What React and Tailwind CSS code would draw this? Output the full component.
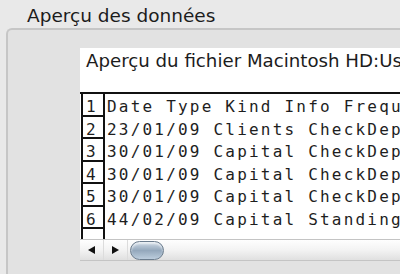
import React from "react";

const rows = [
    "Date Type Kind Info Frequency",
    "23/01/09 Clients CheckDeposit",
    "30/01/09 Capital CheckDeposit",
    "30/01/09 Capital CheckDeposit",
    "30/01/09 Capital CheckDeposit",
    "44/02/09 Capital StandingOrder",
    "",
];

const mono = "font-['DejaVu_Sans_Mono',monospace] text-[16px] text-[#1e1e1e]";

const Row = ({ n, text, tall }) => (
    <div className={`flex ${tall ? "h-[23px]" : "h-[22px]"} shrink-0`}>
        <div
            className={`ml-[1px] w-[24px] shrink-0 border-x-2 border-b-2 border-[#111] pl-[3px] pt-[3px] leading-[20px] ${mono}`}
        >
            {n}
        </div>
        <div className={`pl-[2px] pt-[3px] leading-[20px] tracking-[2.2px] whitespace-nowrap ${mono}`}>
            {text}
        </div>
    </div>
);

const App = () => {
    return (
        <div className="w-[400px] h-[274px] overflow-hidden bg-[#e9e9e9] font-['DejaVu_Sans',sans-serif]">
            <div className="h-[28px] pl-[27px] pt-[1px] text-[18.5px] leading-[29px] text-[#1c1c1c] whitespace-nowrap">
                Aperçu des données
            </div>
            <div className="ml-[6px] h-[246px] border-l-2 border-t-2 border-[#c6c6c6] rounded-tl-[6px] bg-[#e2e2e2] pt-[18px] pl-[72px]">
                <div className="h-[191px] bg-white flex flex-col overflow-hidden">
                    <div className="h-[44px] shrink-0 pl-[6px] pt-[2px] text-[18.2px] leading-[21px] text-[#1c1c1c] whitespace-nowrap">
                        Aperçu du fichier Macintosh HD:Users
                    </div>
                    <div className="border-t-2 border-[#111] flex flex-col">
                        {rows.map((text, i) => (
                            <Row key={i} n={text ? i + 1 : ""} text={text} tall={i % 2 === 0} />
                        ))}
                    </div>
                </div>
                {/* scroll bar */}
                <div className="h-[22px] border-t border-b border-[#c4c4c4] bg-gradient-to-b from-[#fefefe] via-[#f3f3f3] to-[#e0e0e0] flex items-center">
                    <div className="w-[24px] h-full flex items-center justify-center border-r border-[#dcdcdc]">
                        <svg width="7" height="8" viewBox="0 0 7 8">
                            <path d="M0 4 L7 0 L7 8 Z" fill="#111" />
                        </svg>
                    </div>
                    <div className="w-[24px] h-full flex items-center justify-center border-r border-[#dcdcdc]">
                        <svg width="7" height="8" viewBox="0 0 7 8">
                            <path d="M7 4 L0 0 L0 8 Z" fill="#111" />
                        </svg>
                    </div>
                    <div className="ml-[2px] w-[34px] h-[19px] rounded-full border border-[#6c7d8e] bg-gradient-to-b from-[#d0dbe6] via-[#94a8bc] to-[#bccddd] shadow-[inset_0_2px_2px_rgba(255,255,255,0.6)]" />
                </div>
            </div>
        </div>
    );
};

export default App;
